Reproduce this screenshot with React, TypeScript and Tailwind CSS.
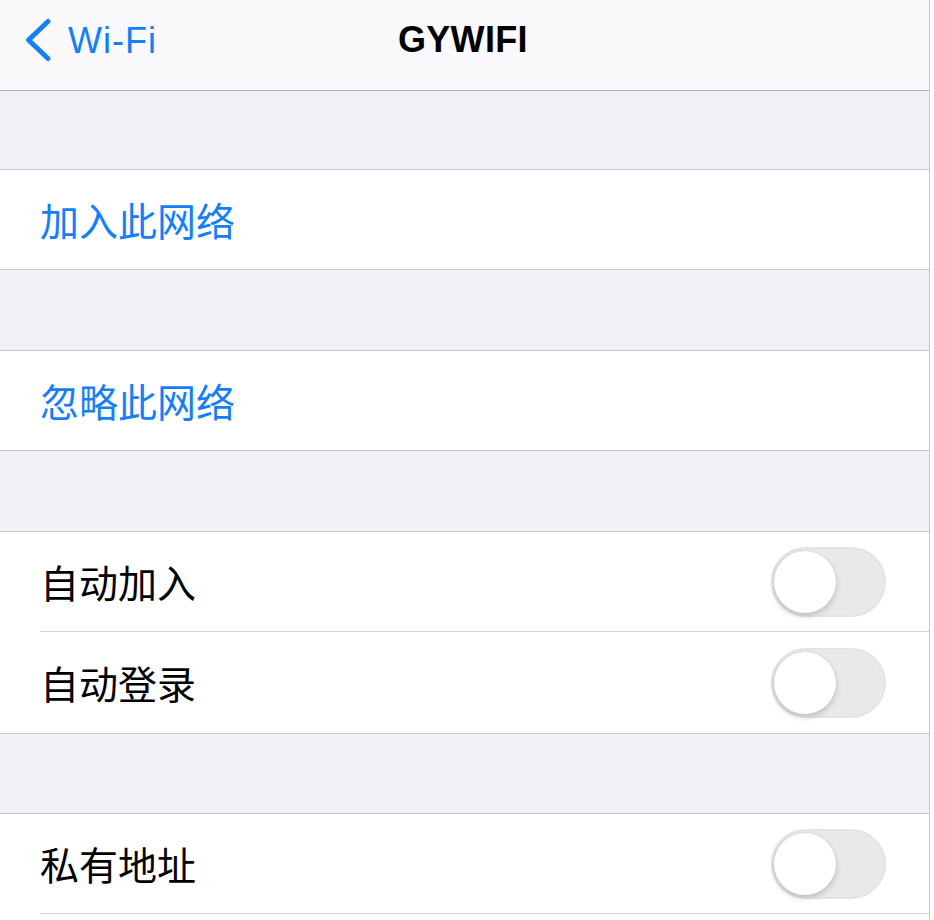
import { useState } from "react"

const cjk = "font-['Noto_Sans_CJK_SC','Noto_Sans',sans-serif]"

const Toggle = ({ on, onClick }: { on: boolean; onClick: () => void }) => (
    <button
        onClick={onClick}
        className={`relative w-[115px] h-[70px] rounded-full border-[2px] shrink-0 ${on ? "bg-[#34c759] border-[#34c759]" : "bg-[#e9e9eb] border-[#e4e4e6]"}`}
    >
        <span
            className={`absolute top-[2px] w-[62px] h-[62px] rounded-full bg-white shadow-[0_3px_6px_rgba(0,0,0,0.18),0_0_1px_rgba(0,0,0,0.15)] ${on ? "left-[47px]" : "left-[1px]"}`}
        />
    </button>
)

const Gap = ({ h }: { h: string }) => (
    <div className={`${h} bg-[#f0f0f5] border-b border-[#c8c7cc]`} />
)

const App = () => {

    const [ toggles, setToggles ] = useState({ join: false, login: false, priv: false })

    return (
        <div className="w-[934px] h-[920px] bg-white overflow-hidden">
            <div className="w-[930px] h-full border-r border-[#c8c7cc] flex flex-col">

                {/* nav bar */}
                <div className="h-[91px] shrink-0 bg-[#f9f9fb] border-b border-[#b2b2b6] relative flex items-start pt-[17px]">
                    <button className="flex items-start pl-[21px] text-[#157efb]">
                        <svg width="32" height="46" viewBox="0 0 32 46" fill="none">
                            <path d="M27 4.5 L7.5 23 L27 41.5" stroke="currentColor" strokeWidth="5" strokeLinecap="round" strokeLinejoin="round" />
                        </svg>
                        <span className="ml-[15px] mt-[6px] text-[36px] tracking-[1px] font-['Liberation_Sans',Arial,sans-serif] leading-none">Wi-Fi</span>
                    </button>
                    <h1 className="absolute left-[398px] top-[22px] text-[36px] font-bold font-['Liberation_Sans',Arial,sans-serif] leading-none tracking-[0.3px]">GYWIFI</h1>
                </div>

                <Gap h="h-[79px]" />

                <div className="h-[100px] shrink-0 bg-white border-b border-[#c8c7cc] flex items-center pl-[40px]">
                    <span className={`${cjk} text-[39px] text-[#157efb] leading-none`}>加入此网络</span>
                </div>

                <Gap h="h-[81px]" />

                <div className="h-[100px] shrink-0 bg-white border-b border-[#c8c7cc] flex items-center pl-[40px]">
                    <span className={`${cjk} text-[39px] text-[#157efb] leading-none`}>忽略此网络</span>
                </div>

                <Gap h="h-[81px]" />

                <div className="bg-white border-b border-[#c8c7cc] pl-[40px]">
                    <div className="h-[100px] flex items-center justify-between pr-[43px] border-b border-[#d1d1d6]">
                        <span className={`${cjk} text-[39px] text-black leading-none`}>自动加入</span>
                        <Toggle on={toggles.join} onClick={() => setToggles({ ...toggles, join: !toggles.join })} />
                    </div>
                    <div className="h-[101px] flex items-center justify-between pr-[43px]">
                        <span className={`${cjk} text-[39px] text-black leading-none`}>自动登录</span>
                        <Toggle on={toggles.login} onClick={() => setToggles({ ...toggles, login: !toggles.login })} />
                    </div>
                </div>

                <Gap h="h-[80px]" />

                <div className="bg-white pl-[40px]">
                    <div className="h-[100px] flex items-center justify-between pr-[43px] border-b border-[#d1d1d6]">
                        <span className={`${cjk} text-[39px] text-black leading-none`}>私有地址</span>
                        <Toggle on={toggles.priv} onClick={() => setToggles({ ...toggles, priv: !toggles.priv })} />
                    </div>
                </div>
            </div>
        </div>
    )
}

export default App
